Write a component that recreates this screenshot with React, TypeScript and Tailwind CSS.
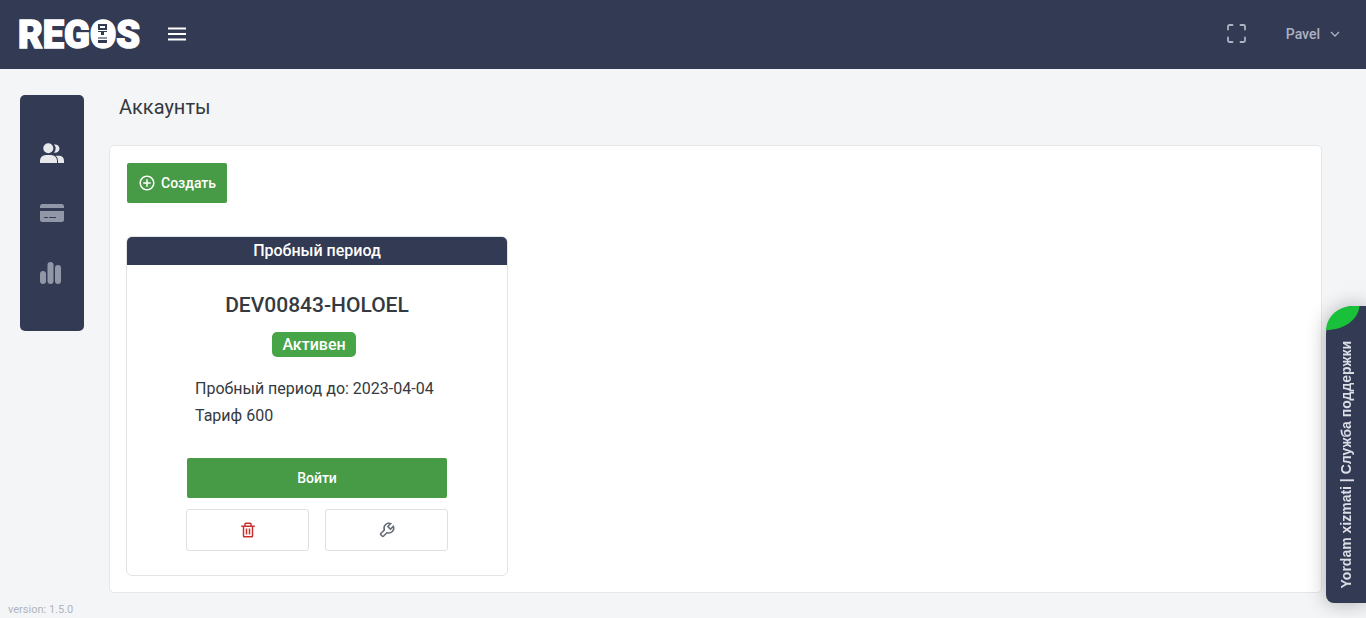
import type { ReactNode } from 'react';
import clsx from 'clsx';
import { BiPlusCircle, BiTrash, BiWrench } from 'react-icons/bi';

interface NavItem {
    label: string;
    active?: boolean;
    icon: ReactNode;
}

const navItems: NavItem[] = [
    {
        label: 'Аккаунты',
        active: true,
        icon: (
            <svg width="24" height="20" viewBox="0 0 24 20" fill="currentColor">
                <circle cx="8.3" cy="5.2" r="5" />
                <path d="M0 20v-2.5A5.8 5.8 0 0 1 5.8 12h5.4a5.8 5.8 0 0 1 5.8 5.5V20z" />
                <path d="M14 9.6a6.3 6.3 0 0 0 0-8 4.2 4.2 0 1 1 0 8z" />
                <path d="M18 20v-2.5a7 7 0 0 0-2.2-4.8h3.4A4.8 4.8 0 0 1 24 17.4V20z" />
            </svg>
        ),
    },
    {
        label: 'Оплата',
        icon: (
            <svg width="24" height="18" viewBox="0 0 24 18" fill="currentColor">
                <path d="M0 4V2.5A2.5 2.5 0 0 1 2.5 0h19A2.5 2.5 0 0 1 24 2.5V4z" />
                <path d="M0 7h24v8.5a2.5 2.5 0 0 1-2.5 2.5h-19A2.5 2.5 0 0 1 0 15.5z" />
                <path d="M4.5 13.5h3M9.5 13.5h6" stroke="#333a54" strokeLinecap="round" />
            </svg>
        ),
    },
    {
        label: 'Статистика',
        icon: (
            <svg width="24" height="22" viewBox="0 0 24 22" fill="currentColor">
                <rect x="0" y="9" width="6" height="13" rx="3" />
                <rect x="7.5" y="0" width="6" height="22" rx="3" />
                <rect x="15" y="3" width="6" height="19" rx="3" />
            </svg>
        ),
    },
];

const Logo = () => (
    <a href="#" aria-label="REGOS" className="block text-white">
        <svg width="122" height="50" viewBox="0 0 122 50" fill="currentColor" className="overflow-visible">
            <text
                x="0"
                y="39"
                fontSize="38"
                fontWeight="900"
                stroke="currentColor"
                strokeWidth="1.5"
                className="font-[Roboto,sans-serif]"
            >
                REGOS
            </text>
            {/* Terminal inside the O */}
            <rect x="79" y="14" width="11" height="22" rx="2" />
            <rect x="80" y="15" width="9" height="6" fill="#333a54" />
            <rect x="82" y="17" width="5" height="2" />
            <path d="M80 22h9v1h-3v3h-3v-3h-3z" fill="#333a54" />
            <rect x="80" y="28" width="9" height="2" fill="#8e93a5" />
            <rect x="80" y="31" width="9" height="3" fill="#333a54" />
        </svg>
    </a>
);

const Header = () => (
    <header className="flex h-[69px] items-center justify-between bg-[#333a54] pb-0.5 pl-[18px] pr-6">
        <div className="flex items-center gap-7">
            <Logo />
            <button aria-label="Меню" className="text-white">
                <svg width="18" height="14" viewBox="0 0 18 14" stroke="currentColor" strokeWidth="1.8">
                    <path d="M0 1.5h18M0 7h18M0 12.5h18" />
                </svg>
            </button>
        </div>
        <div className="flex items-center gap-10 text-[#aeb2c2]">
            <button aria-label="На весь экран">
                <svg width="19" height="19" viewBox="0 0 19 19" fill="none" stroke="currentColor" strokeWidth="1.8" strokeLinecap="round">
                    <path d="M1 5.5v-3A1.5 1.5 0 0 1 2.5 1h3M13.5 1h3A1.5 1.5 0 0 1 18 2.5v3M18 13.5v3a1.5 1.5 0 0 1-1.5 1.5h-3M5.5 18h-3A1.5 1.5 0 0 1 1 16.5v-3" />
                </svg>
            </button>
            <button className="flex items-center gap-2 text-sm font-medium">
                Pavel
                <svg width="14" height="14" viewBox="0 0 14 14" fill="none" stroke="currentColor" strokeWidth="1.3">
                    <path d="m3 5 4 4 4-4" />
                </svg>
            </button>
        </div>
    </header>
);

const Sidebar = () => (
    <nav className="flex w-16 shrink-0 flex-col items-center rounded-[5px] bg-[#333a54] py-7">
        {navItems.map((item) => (
            <a
                key={item.label}
                href="#"
                aria-label={item.label}
                className={clsx(
                    'flex h-[60px] w-full items-center justify-center',
                    item.active ? 'text-[#e7e8eb]' : 'text-[#9297a8]'
                )}
            >
                {item.icon}
            </a>
        ))}
    </nav>
);

const AccountCard = () => (
    <article className="w-[382px] max-w-full overflow-hidden rounded-md border border-[#e2e5e8] bg-white">
        <div className="bg-[#333a54] text-center text-base font-medium leading-7 text-white">Пробный период</div>
        <div className="flex flex-col px-[59px] pb-6 pt-6">
            <h2 className="text-center text-[21px] font-medium leading-8">DEV00843-HOLOEL</h2>
            <span className="mr-1.5 mt-[11px] self-center rounded-[5px] bg-[#47a447] px-[10px] text-base font-medium leading-[25px] text-white">
                Активен
            </span>
            <div className="mt-[18px] px-[9px] text-base leading-[27px]">
                <p className="whitespace-nowrap">Пробный период до: 2023-04-04</p>
                <p>Тариф 600</p>
            </div>
            <button className="mt-[28px] h-[42px] rounded-[3px] border border-transparent bg-[#479a46] bg-clip-padding text-sm font-medium text-white">
                Войти
            </button>
            <div className="mt-[10px] grid grid-cols-2 gap-4">
                <button aria-label="Удалить" className="flex h-[42px] items-center justify-center rounded-[3px] border border-[#dfe0e6] text-[#c9302c]">
                    <BiTrash size={18} />
                </button>
                <button aria-label="Настроить" className="flex h-[42px] items-center justify-center rounded-[3px] border border-[#dfe0e6] text-[#666b78]">
                    <BiWrench size={18} />
                </button>
            </div>
        </div>
    </article>
);

const SupportTab = () => (
    <button className="fixed bottom-[15px] right-0 flex h-[297px] w-10 items-end justify-center rounded-bl-lg rounded-tl-[28px] bg-[#333a54] pb-[15px] shadow-[0_0_20px_rgba(0,0,0,0.3)]">
        <svg className="absolute left-0 top-0" width="34" height="24" viewBox="0 0 34 24" fill="#18c139">
            <path d="M0 24C1 10 12 0 28 0h5.5C32 14 18 24 0 24z" />
        </svg>
        <span className="rotate-180 whitespace-nowrap font-['Liberation_Sans',Arial,sans-serif] text-sm font-bold leading-5 text-[#dcdee6] [writing-mode:vertical-rl]">
            Yordam xizmati | Служба поддержки
        </span>
    </button>
);

export default function App() {
    return (
        <div className="flex min-h-screen flex-col bg-[#f4f5f7] font-[Roboto,'Noto_Sans',sans-serif] text-[#343a40]">
            <Header />
            <div className="flex flex-1 items-start gap-[25px] pl-5 pr-11 pt-[26px]">
                <Sidebar />
                <main className="min-w-0 flex-1">
                    <h1 className="pl-[10px] text-xl leading-6">Аккаунты</h1>
                    <section className="mt-[26px] rounded-[5px] border border-[#e4e6e9] bg-white p-4">
                        <button className="flex h-[42px] items-center gap-[5px] rounded-[3px] border border-transparent bg-[#479a46] bg-clip-padding px-[11px] text-sm font-medium text-white">
                            <BiPlusCircle size={18} />
                            Создать
                        </button>
                        <div className="mt-8">
                            <AccountCard />
                        </div>
                    </section>
                </main>
            </div>
            <footer className="px-2 text-[11px] leading-4 text-[#b0b4bc]">version: 1.5.0</footer>
            <SupportTab />
        </div>
    );
}
